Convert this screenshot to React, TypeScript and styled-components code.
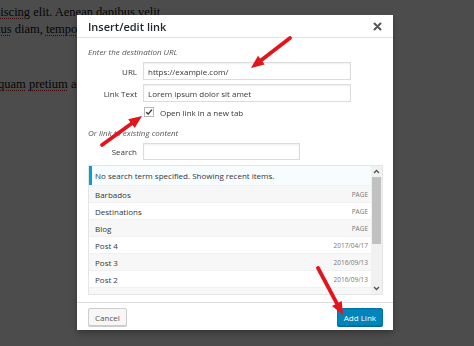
import React from "react"
import styled, { createGlobalStyle } from "styled-components"

const GlobalStyle = createGlobalStyle`
  html, body {
    margin: 0;
    padding: 0;
  }
  body {
    width: 474px;
    height: 346px;
    overflow: hidden;
    background: #fff;
    font-family: "Open Sans", sans-serif;
  }
`

const results = [
    { title: "Barbados", info: "PAGE" },
    { title: "Destinations", info: "PAGE" },
    { title: "Blog", info: "PAGE" },
    { title: "Post 4", info: "2017/04/17" },
    { title: "Post 3", info: "2016/09/13" },
    { title: "Post 2", info: "2016/09/13" },
    { title: "Post 1", info: "2016/09/13" },
]

const arrows = [
    { x1: 290, y1: 38, x2: 251, y2: 68 },
    { x1: 102, y1: 145, x2: 142, y2: 116 },
    { x1: 318, y1: 268, x2: 343, y2: 315 },
]

const Arrow = ({ x1, y1, x2, y2 }) => {
    const dx = x2 - x1
    const dy = y2 - y1
    const len = Math.sqrt(dx * dx + dy * dy)
    const ux = dx / len
    const uy = dy / len
    const head = 13
    const half = 5.5
    const bx = x2 - ux * head
    const by = y2 - uy * head
    const points = `${x2},${y2} ${bx - uy * half},${by + ux * half} ${bx + uy * half},${by - ux * half}`
    return (
        <g>
            <line x1={x1} y1={y1} x2={bx + ux} y2={by + uy} stroke="#e3141b" strokeWidth={3.8} strokeLinecap="round" />
            <polygon points={points} fill="#e3141b" />
        </g>
    )
}

export const App = () => {
    return (
        <>
            <GlobalStyle />
            <Page>
                <Paragraph>
                    <Line $shift={-6}>
                        <Typo>piscing</Typo> elit. Aenean dapibus velit
                    </Line>
                    <Line $shift={-3}>
                        <Typo>tus</Typo> diam, <Typo>tempor</Typo> sit amet lacus vel
                    </Line>
                </Paragraph>
                <Paragraph>
                    <Line $shift={-2}>
                        <Typo>quam</Typo> <Typo>pretium</Typo> a lorem ut porta
                    </Line>
                </Paragraph>
            </Page>
            <Overlay />
            <Dialog>
                <Header>
                    <Title>Insert/edit link</Title>
                    <Close aria-label="Close">
                        <svg width="9" height="9" viewBox="0 0 9 9">
                            <path d="M1.5 1.5 L7.5 7.5 M7.5 1.5 L1.5 7.5" stroke="#555" strokeWidth="2" strokeLinecap="round" />
                        </svg>
                    </Close>
                </Header>
                <Body>
                    <Hint>Enter the destination URL</Hint>
                    <FieldRow $top={4}>
                        <Label>URL</Label>
                        <Input $width={208} defaultValue="https://example.com/" />
                    </FieldRow>
                    <FieldRow $top={4}>
                        <Label>Link Text</Label>
                        <Input $width={208} defaultValue="Lorem ipsum dolor sit amet" />
                    </FieldRow>
                    <CheckRow>
                        <Box>
                            <svg width="8" height="8" viewBox="0 0 8 8">
                                <path d="M1.2 4.2 L3.2 6.1 L7 1.6" stroke="#333" strokeWidth="1.4" fill="none" />
                            </svg>
                        </Box>
                        <CheckText>Open link in a new tab</CheckText>
                    </CheckRow>
                    <Hint $top={9}>Or link to existing content</Hint>
                    <FieldRow $top={4}>
                        <Label>Search</Label>
                        <Input $width={157} $height={17} defaultValue="" />
                    </FieldRow>
                    <Results>
                        <List>
                            <Notice>No search term specified. Showing recent items.</Notice>
                            {results.map((item, i) => (
                                <Row key={item.title} $alt={i % 2 === 0}>
                                    <span>{item.title}</span>
                                    <Info>{item.info}</Info>
                                </Row>
                            ))}
                        </List>
                        <Scrollbar>
                            <ScrollArrow>
                                <svg width="7" height="5" viewBox="0 0 7 5">
                                    <path d="M1 4 L3.5 1.5 L6 4" stroke="#505050" strokeWidth="1.3" fill="none" />
                                </svg>
                            </ScrollArrow>
                            <Track>
                                <Thumb />
                            </Track>
                            <ScrollArrow>
                                <svg width="7" height="5" viewBox="0 0 7 5">
                                    <path d="M1 1 L3.5 3.5 L6 1" stroke="#505050" strokeWidth="1.3" fill="none" />
                                </svg>
                            </ScrollArrow>
                        </Scrollbar>
                    </Results>
                </Body>
                <Footer>
                    <Button>Cancel</Button>
                    <Button $primary>Add Link</Button>
                </Footer>
            </Dialog>
            <Annotations width="474" height="346" viewBox="0 0 474 346">
                {arrows.map((a, i) => (
                    <Arrow key={i} {...a} />
                ))}
            </Annotations>
        </>
    )
}

export default App

const Page = styled.div`
    padding-top: 4px;
    font-family: "Liberation Serif", "Times New Roman", serif;
    font-size: 12.5px;
    color: #111;
    white-space: nowrap;
    overflow: hidden;
`

const Paragraph = styled.div`
    margin: 0 0 38px;
`

const Line = styled.div<{ $shift: number }>`
    line-height: 17px;
    margin-left: ${(p) => p.$shift}px;
`

const Typo = styled.span`
    text-decoration: underline dotted #d02020;
    text-underline-offset: 2px;
`

const Overlay = styled.div`
    position: fixed;
    inset: 0;
    background: rgba(0, 0, 0, 0.7);
`

const Dialog = styled.div`
    position: absolute;
    left: 77px;
    top: 15px;
    width: 316px;
    height: 315px;
    background: #fff;
    box-shadow: 0 3px 6px rgba(0, 0, 0, 0.3);
    display: flex;
    flex-direction: column;
`

const Header = styled.div`
    height: 23px;
    box-sizing: border-box;
    border-bottom: 1px solid #e2e2e2;
    padding: 0 8px 0 11px;
    display: flex;
    align-items: center;
    justify-content: space-between;
`

const Title = styled.h1`
    margin: 0;
    font-size: 11px;
    font-weight: 600;
    color: #23282d;
`

const Close = styled.button`
    border: 0;
    background: none;
    padding: 0;
    width: 9px;
    height: 9px;
    display: flex;
    margin-right: 3px;
`

const Body = styled.div`
    padding: 8px 10px 0 11px;
    display: flex;
    flex-direction: column;
`

const Hint = styled.div<{ $top?: number }>`
    margin-top: ${(p) => p.$top ?? 0}px;
    height: 12px;
    line-height: 12px;
    font-size: 8px;
    font-style: italic;
    color: #555;
`

const FieldRow = styled.div<{ $top: number }>`
    margin-top: ${(p) => p.$top}px;
    display: flex;
    align-items: center;
    gap: 6px;
`

const Label = styled.label`
    width: 49px;
    text-align: right;
    font-size: 8px;
    color: #32373c;
    white-space: nowrap;
`

const Input = styled.input<{ $width: number; $height?: number }>`
    width: ${(p) => p.$width}px;
    height: ${(p) => p.$height ?? 18}px;
    box-sizing: border-box;
    border: 1px solid #dcdcdc;
    box-shadow: inset 0 1px 2px rgba(0, 0, 0, 0.07);
    padding: 0 4px;
    font-family: "Open Sans", sans-serif;
    font-size: 8px;
    color: #32373c;
    outline: none;
`

const CheckRow = styled.div`
    margin: 4px 0 0 56px;
    height: 12px;
    display: flex;
    align-items: center;
    gap: 6px;
`

const Box = styled.span`
    width: 10px;
    height: 10px;
    box-sizing: border-box;
    border: 1px solid #b4b9be;
    display: flex;
    align-items: center;
    justify-content: center;
    background: #fff;
`

const CheckText = styled.span`
    font-size: 8px;
    color: #32373c;
`

const Results = styled.div`
    margin-top: 5px;
    height: 130px;
    width: 295px;
    box-sizing: border-box;
    border: 1px solid #e5e5e5;
    display: flex;
    overflow: hidden;
`

const List = styled.div`
    flex: 1;
    overflow: hidden;
`

const Notice = styled.div`
    height: 19px;
    box-sizing: border-box;
    border-left: 3px solid #00a0d2;
    background: #f7fcfe;
    padding-left: 3px;
    line-height: 19px;
    font-size: 8px;
    color: #32373c;
`

const Row = styled.div<{ $alt: boolean }>`
    height: 17px;
    box-sizing: border-box;
    border-top: 1px solid #f1f1f1;
    background: ${(p) => (p.$alt ? "#f7f7f7" : "#fff")};
    padding: 0 3px 0 6px;
    display: flex;
    align-items: center;
    justify-content: space-between;
    font-size: 8px;
    color: #32373c;
`

const Info = styled.span`
    font-size: 6.5px;
    color: #777;
`

const Scrollbar = styled.div`
    width: 11px;
    background: #f1f1f1;
    display: flex;
    flex-direction: column;
`

const ScrollArrow = styled.div`
    height: 11px;
    display: flex;
    align-items: center;
    justify-content: center;
`

const Track = styled.div`
    flex: 1;
    padding: 0 1px;
`

const Thumb = styled.div`
    height: 67px;
    background: #c1c1c1;
`

const Footer = styled.div`
    margin-top: 7px;
    border-top: 1px solid #dddddd;
    padding: 5px 10px 4px 11px;
    display: flex;
    justify-content: space-between;
    align-items: flex-start;
    background: #fff;
    flex: 1;
`

const Button = styled.button<{ $primary?: boolean }>`
    height: 18px;
    box-sizing: border-box;
    padding: 0 6px;
    border-radius: 2px;
    font-family: "Open Sans", sans-serif;
    font-size: 8px;
    border: 1px solid ${(p) => (p.$primary ? "#0073aa" : "#cccccc")};
    background: ${(p) => (p.$primary ? "#0085ba" : "#f7f7f7")};
    color: ${(p) => (p.$primary ? "#fff" : "#555")};
    box-shadow: 0 1px 0 ${(p) => (p.$primary ? "#006799" : "#cccccc")};
`

const Annotations = styled.svg`
    position: absolute;
    left: 0;
    top: 0;
    pointer-events: none;
`
